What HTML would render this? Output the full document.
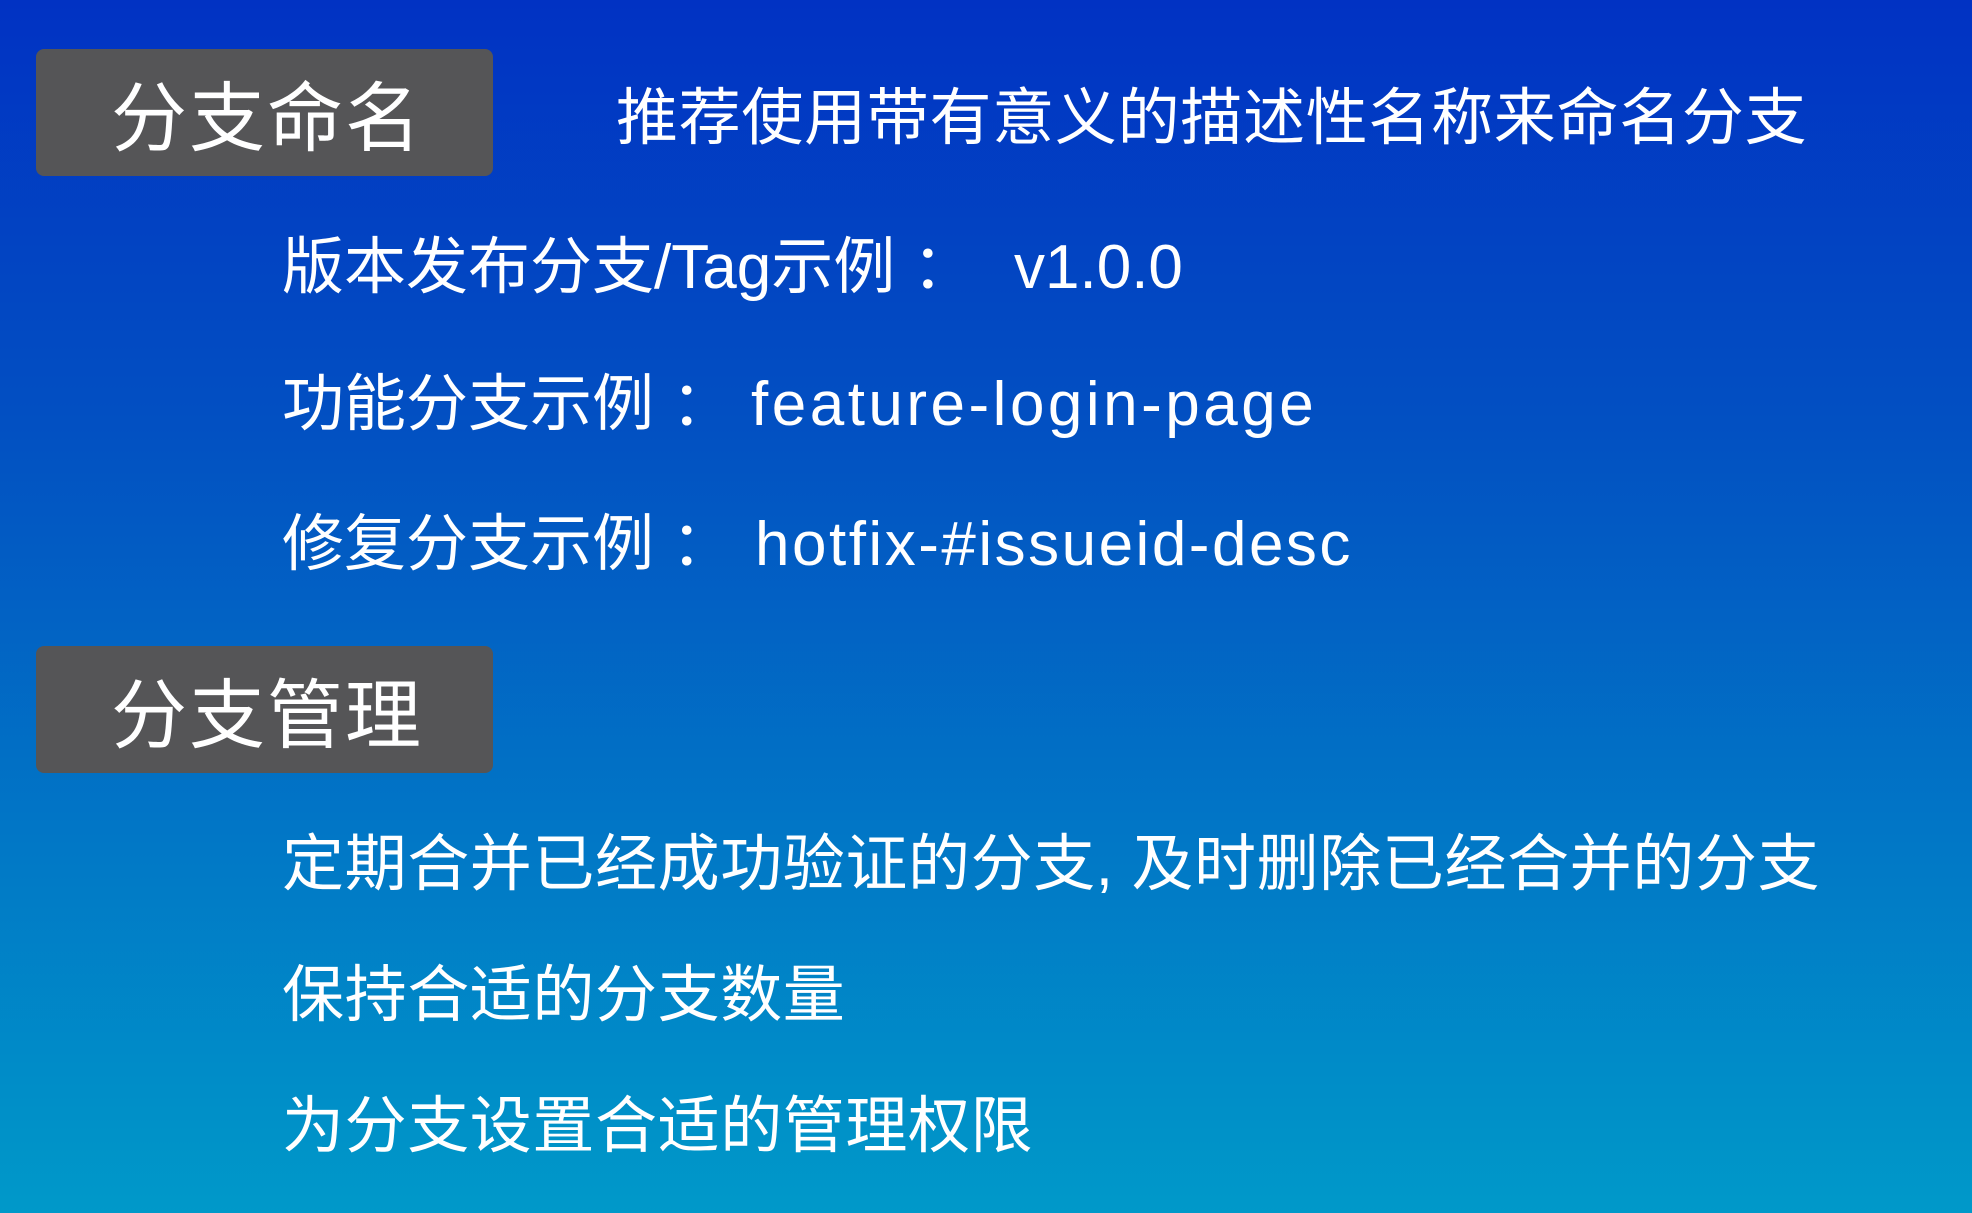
<!DOCTYPE html>
<html><head><meta charset="utf-8"><style>
html,body{margin:0;padding:0}
body{width:1972px;height:1213px;overflow:hidden;position:relative;
background:linear-gradient(180deg,#0132c3 0%,#0250c2 35%,#0178c6 70%,#0099c9 100%);
font-family:"Liberation Sans","Noto Sans CJK SC",sans-serif;color:#fff}
.box{position:absolute;left:36px;width:457px;height:127px;background:#555557;border-radius:8px;
font-family:"Noto Sans CJK SC",sans-serif;font-size:76px;line-height:127px;text-indent:75px;letter-spacing:2px}
.t{position:absolute;font-size:62px;line-height:80px;white-space:nowrap;font-family:"Liberation Sans","Noto Sans CJK SC",sans-serif}
</style></head><body>
<div class="box" style="top:49px">分支命名</div>
<div class="t" style="left:616px;top:79px;letter-spacing:0.7px">推荐使用带有意义的描述性名称来命名分支</div>
<div class="t" style="left:282px;top:228px">版本发布分支/Tag示例 ：</div>
<div class="t" style="left:1014px;top:228px">v1.0.0</div>
<div class="t" style="left:282px;top:365px">功能分支示例 ：</div>
<div class="t" style="left:751px;top:365px;letter-spacing:3.5px">feature-login-page</div>
<div class="t" style="left:282px;top:505px">修复分支示例 ：</div>
<div class="t" style="left:755px;top:505px;letter-spacing:2.5px">hotfix-#issueid-desc</div>
<div class="box" style="top:646px">分支管理</div>
<div class="t" style="left:282px;top:825px;letter-spacing:0.6px">定期合并已经成功验证的分支, 及时删除已经合并的分支</div>
<div class="t" style="left:282px;top:956px;letter-spacing:0.6px">保持合适的分支数量</div>
<div class="t" style="left:282px;top:1087px;letter-spacing:0.6px">为分支设置合适的管理权限</div>
</body></html>
